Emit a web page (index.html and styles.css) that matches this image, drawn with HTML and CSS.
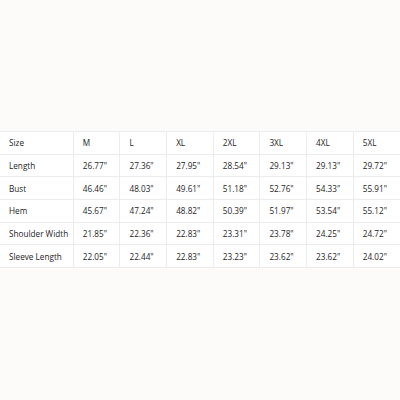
FILE: index.html
```html
<!DOCTYPE html>
<html>
<head>
<meta charset="utf-8">
<link rel="stylesheet" href="styles.css">
</head>
<body>
<div class="page">
<table class="sizes">
<colgroup><col class="c-label"><col class="c-val"><col class="c-val"><col class="c-val"><col class="c-val"><col class="c-val"><col class="c-val"><col class="c-val"></colgroup>
<tr><td>Size</td><td>M</td><td>L</td><td>XL</td><td>2XL</td><td>3XL</td><td>4XL</td><td>5XL</td></tr>
<tr><td>Length</td><td>26.77"</td><td>27.36"</td><td>27.95"</td><td>28.54"</td><td>29.13"</td><td>29.13"</td><td>29.72"</td></tr>
<tr><td>Bust</td><td>46.46"</td><td>48.03"</td><td>49.61"</td><td>51.18"</td><td>52.76"</td><td>54.33"</td><td>55.91"</td></tr>
<tr><td>Hem</td><td>45.67"</td><td>47.24"</td><td>48.82"</td><td>50.39"</td><td>51.97"</td><td>53.54"</td><td>55.12"</td></tr>
<tr><td>Shoulder Width</td><td>21.85"</td><td>22.36"</td><td>22.83"</td><td>23.31"</td><td>23.78"</td><td>24.25"</td><td>24.72"</td></tr>
<tr><td>Sleeve Length</td><td>22.05"</td><td>22.44"</td><td>22.83"</td><td>23.23"</td><td>23.62"</td><td>23.62"</td><td>24.02"</td></tr>
</table>
</div>
</body>
</html>
```
FILE: styles.css
```css
html, body {
  margin: 0;
  padding: 0;
  background: #fcfbfa;
}
.page {
  width: 400px;
  height: 400px;
  padding-top: 131px;
  box-sizing: border-box;
}
.sizes {
  width: 400px;
  border-collapse: collapse;
  table-layout: fixed;
  background: #ffffff;
  font-family: "Open Sans", "Noto Sans", sans-serif;
  font-size: 8.2px;
  color: #1e1e1e;
}
.c-label { width: 73.3px; }
.c-val { width: 46.67px; }
.sizes td {
  height: 22.67px;
  padding: 0 0 0 9px;
  box-sizing: border-box;
  border: 1px solid #ececec;
  white-space: nowrap;
  vertical-align: middle;
}
.sizes td:first-child { border-left: none; }
.sizes td:last-child { border-right: none; }
```
